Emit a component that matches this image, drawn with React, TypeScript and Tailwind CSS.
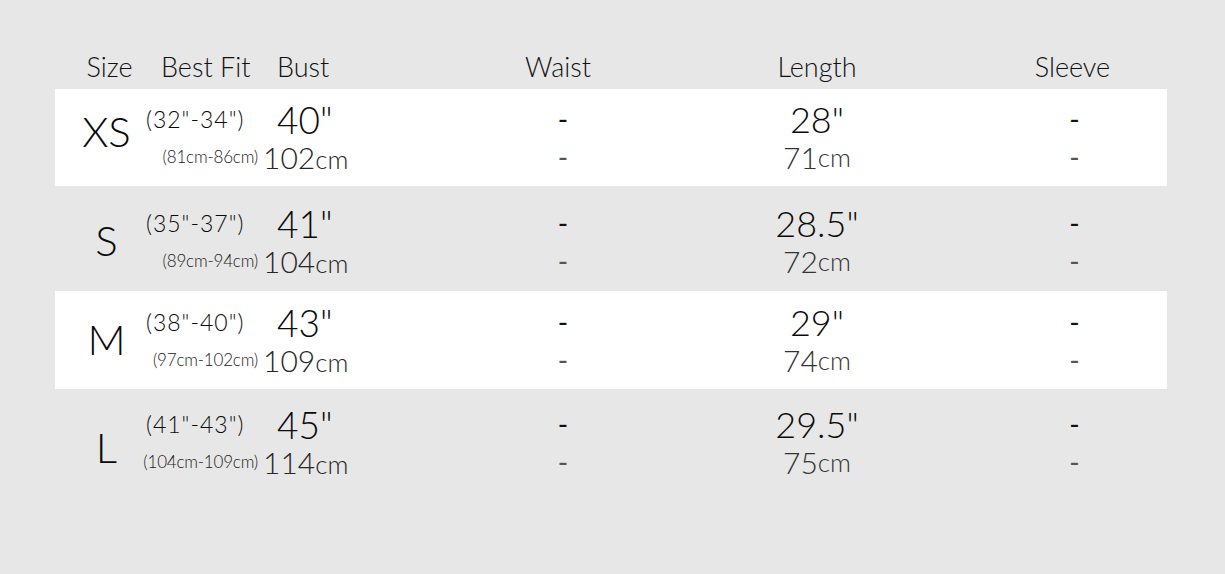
const rows = [
  {
    size: "XS",
    bg: "bg-white",
    box: "h-[97px] pt-[11px]",
    nudge: "pb-[14px]",
    fit: "(32\"-34\")",
    fitCm: "(81cm-86cm)",
    bust: "40\"",
    bustCm: "102",
    length: "28\"",
    lengthCm: "71",
  },
  {
    size: "S",
    bg: "bg-[#e7e7e7]",
    box: "h-[105px] pt-[18px]",
    nudge: "pb-[4px]",
    fit: "(35\"-37\")",
    fitCm: "(89cm-94cm)",
    bust: "41\"",
    bustCm: "104",
    length: "28.5\"",
    lengthCm: "72",
  },
  {
    size: "M",
    bg: "bg-white",
    box: "h-[98px] pt-[12px]",
    nudge: "pb-[4px]",
    fit: "(38\"-40\")",
    fitCm: "(97cm-102cm)",
    bust: "43\"",
    bustCm: "109",
    length: "29\"",
    lengthCm: "74",
  },
  {
    size: "L",
    bg: "bg-[#e7e7e7]",
    box: "h-[101px] pt-[16px]",
    nudge: "pt-[8px]",
    fit: "(41\"-43\")",
    fitCm: "(104cm-109cm)",
    bust: "45\"",
    bustCm: "114",
    length: "29.5\"",
    lengthCm: "75",
  },
];

function Dashes() {
  return (
    <div className="flex flex-col items-center">
      <div className="flex h-[38px] items-center text-[28px] font-normal text-[#111]">-</div>
      <div className="flex h-[38px] items-center text-[28px] font-normal text-[#555]">-</div>
    </div>
  );
}

export default function App() {
  return (
    <div className="h-[574px] w-full bg-[#e7e7e7] font-['Lato','Open_Sans',sans-serif] font-light whitespace-nowrap text-[#0a0a0a]">
      <div className="ml-[55px] w-[1112px]">
        {/* header */}
        <div className="flex h-[89px] pt-[50px] text-[27px] leading-[34px] text-[#111]">
          <div className="w-[91px] pl-[18px] text-center">Size</div>
          <div className="flex w-[294px]">
            <span className="ml-[15px] w-[116px]">Best Fit</span>
            <span>Bust</span>
          </div>
          <div className="w-[246px] pr-[10px] text-center">Waist</div>
          <div className="w-[262px] text-center">Length</div>
          <div className="w-[219px] pl-[30px] text-center">Sleeve</div>
        </div>

        {rows.map((r) => (
          <div key={r.size} className={`flex ${r.bg} ${r.box}`}>
            <div className={`flex h-[76px] w-[91px] items-center justify-center pl-[12px] text-[42px] leading-none ${r.nudge}`}>
              {r.size}
            </div>

            <div className="w-[294px]">
              <div className="flex h-[38px] items-center">
                <span className="w-[112px] text-[23px] tracking-[1px]">{r.fit}</span>
                <span className="pl-[19px] text-[37px] leading-none">{r.bust}</span>
              </div>
              <div className="flex h-[38px] items-center">
                <div className="flex w-[112px] justify-end text-[17px] tracking-[-0.2px] text-[#1a1a1a]">{r.fitCm}</div>
                <div className="pl-[5px] leading-none text-[#262626]">
                  <span className="text-[30px]">{r.bustCm}</span>
                  <span className="text-[26px]">cm</span>
                </div>
              </div>
            </div>

            <div className="w-[246px]">
              <Dashes />
            </div>

            <div className="flex w-[262px] flex-col items-center">
              <div className="flex h-[38px] items-center text-[36px] leading-none">{r.length}</div>
              <div className="flex h-[38px] items-center leading-none text-[#333]">
                <span className="text-[30px]">{r.lengthCm}</span>
                <span className="text-[26px]">cm</span>
              </div>
            </div>

            <div className="w-[219px] pl-[34px]">
              <Dashes />
            </div>
          </div>
        ))}
      </div>
    </div>
  );
}
